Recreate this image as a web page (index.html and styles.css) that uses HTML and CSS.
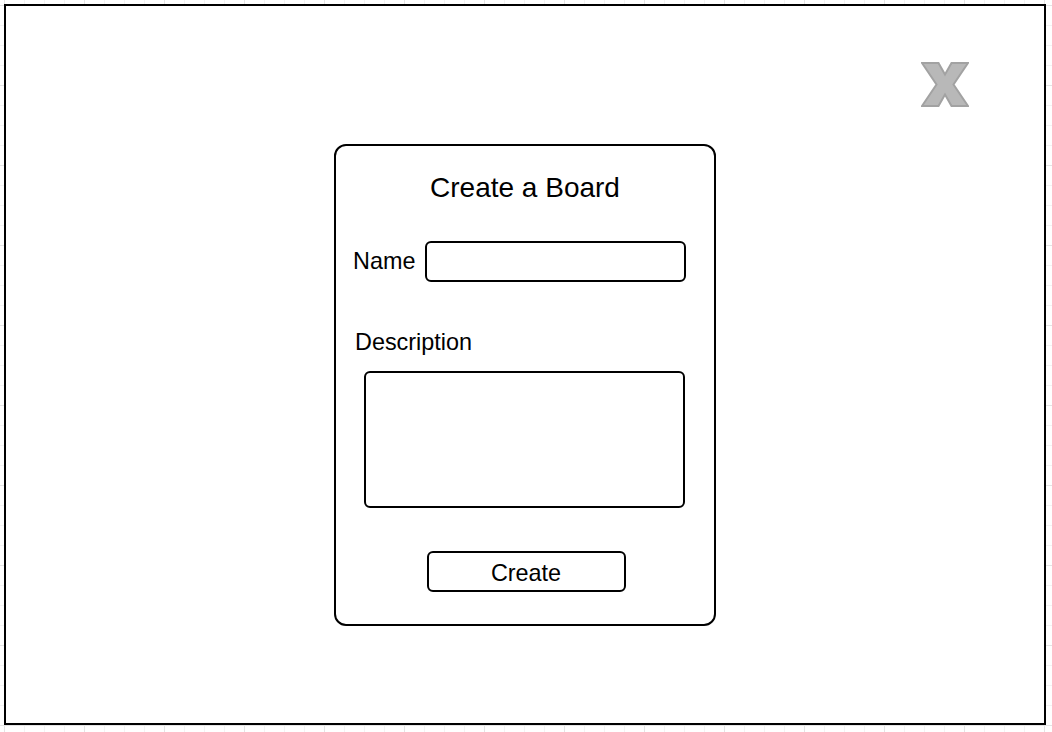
FILE: index.html
```html
<!DOCTYPE html>
<html lang="en">
<head>
<meta charset="utf-8">
<title>Create a Board</title>
<link rel="stylesheet" href="styles.css">
</head>
<body>
  <div class="frame">
    <button class="close" aria-label="Close">
      <svg width="48" height="45" viewBox="0 0 48 45">
        <polygon points="1,1 17.5,1 24,12.5 30.5,1 47,1 32.5,22.5 47,44 30.5,44 24,32.5 17.5,44 1,44 15.5,22.5" fill="#b8b8b8" stroke="#a2a2a2" stroke-width="2" stroke-linejoin="miter"/>
      </svg>
    </button>
    <form class="dialog">
      <h1 class="dialog-title">Create a Board</h1>
      <div class="name-row">
        <label class="label" for="name">Name</label>
        <input class="field name-field" id="name" type="text">
      </div>
      <label class="label desc-label" for="desc">Description</label>
      <textarea class="field desc-field" id="desc"></textarea>
      <button class="create-btn" type="button">Create</button>
    </form>
  </div>
</body>
</html>
```

FILE: styles.css
```css
html, body {
  margin: 0;
  padding: 0;
}

body {
  width: 1052px;
  height: 732px;
  overflow: hidden;
  font-family: "Liberation Sans", Arial, Helvetica, sans-serif;
  color: #000;
  background-color: #fff;
  background-image:
    linear-gradient(to right, #e4e4e4 1px, transparent 1px),
    linear-gradient(to bottom, #e4e4e4 1px, transparent 1px),
    linear-gradient(to right, #f3f3f3 1px, transparent 1px),
    linear-gradient(to bottom, #f3f3f3 1px, transparent 1px);
  background-size: 80px 80px, 80px 80px, 20px 20px, 20px 20px;
  background-position: 4px 5px, 4px 5px, 4px 5px, 4px 5px;
  padding-top: 4px;
  padding-left: 4px;
  box-sizing: border-box;
}

.frame {
  position: relative;
  width: 1042px;
  height: 721px;
  box-sizing: border-box;
  border: 2px solid #000;
  background: #fff;
  display: flex;
  flex-direction: column;
  align-items: center;
  padding-top: 138px;
}

.close {
  position: absolute;
  top: 56px;
  left: 915px;
  padding: 0;
  margin: 0;
  border: 0;
  background: transparent;
  line-height: 0;
}

.dialog {
  width: 382px;
  height: 482px;
  box-sizing: border-box;
  border: 2px solid #000;
  border-radius: 12px;
  margin: 0;
  display: flex;
  flex-direction: column;
  align-items: stretch;
  padding-top: 26px;
}

.dialog-title {
  margin: 0 0 37px 0;
  font-size: 28px;
  line-height: 32px;
  font-weight: normal;
  text-align: center;
}

.name-row {
  display: flex;
  align-items: center;
  padding-left: 17px;
  height: 40px;
}

.label {
  font-size: 23.4px;
  line-height: 26px;
}

.name-row .label {
  width: 72px;
}

.field {
  box-sizing: border-box;
  border: 2px solid #000;
  border-radius: 6px;
  background: #fff;
  margin: 0;
  padding: 0;
  outline: none;
  font: inherit;
  resize: none;
  display: block;
}

.name-field {
  width: 261px;
  height: 41px;
}

.desc-label {
  margin-top: 48px;
  padding-left: 19px;
}

.desc-field {
  width: 321px;
  height: 137px;
  margin: 16px 0 0 28px;
}

.create-btn {
  align-self: center;
  margin-top: 43px;
  margin-left: 2px;
  width: 199px;
  height: 41px;
  box-sizing: border-box;
  border: 2px solid #000;
  border-radius: 6px;
  background: #fff;
  padding: 3px 0 0 0;
  font-family: inherit;
  font-size: 23.4px;
  line-height: 26px;
  color: #000;
}
```
